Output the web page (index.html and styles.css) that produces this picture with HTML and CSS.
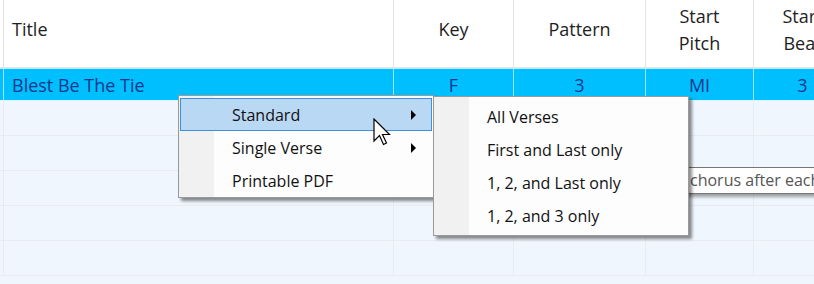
FILE: index.html
```html
<!DOCTYPE html>
<html lang="en">
  <head>
    <meta charset="UTF-8" />
    <meta name="viewport" content="width=device-width, initial-scale=1.0" />
    <link rel="stylesheet" href="styles.css">
    <title>Hymn List</title>
  </head>
  <body>
    <div class="grid">
      <div class="row head">
        <div class="cell gut"></div>
        <div class="cell left">Title</div>
        <div class="cell">Key</div>
        <div class="cell">Pattern</div>
        <div class="cell">Start<br>Pitch</div>
        <div class="cell">Start<br>Beat</div>
      </div>
      <div class="row selected">
        <div class="cell gut"></div>
        <div class="cell left">Blest Be The Tie</div>
        <div class="cell">F</div>
        <div class="cell">3</div>
        <div class="cell">MI</div>
        <div class="cell">3</div>
      </div>
      <div class="row"><div class="cell gut"></div><div class="cell"></div><div class="cell"></div><div class="cell"></div><div class="cell"></div><div class="cell"></div></div>
      <div class="row"><div class="cell gut"></div><div class="cell"></div><div class="cell"></div><div class="cell"></div><div class="cell"></div><div class="cell"></div></div>
      <div class="row"><div class="cell gut"></div><div class="cell"></div><div class="cell"></div><div class="cell"></div><div class="cell"></div><div class="cell"></div></div>
      <div class="row"><div class="cell gut"></div><div class="cell"></div><div class="cell"></div><div class="cell"></div><div class="cell"></div><div class="cell"></div></div>
      <div class="row"><div class="cell gut"></div><div class="cell"></div><div class="cell"></div><div class="cell"></div><div class="cell"></div><div class="cell"></div></div>
    </div>

    <div class="tooltip">chorus after each verse</div>

    <div class="menu menu-main">
      <div class="item active">Standard<span class="arrow"></span></div>
      <div class="item">Single Verse<span class="arrow"></span></div>
      <div class="item">Printable PDF</div>
    </div>

    <div class="menu menu-sub">
      <div class="item">All Verses</div>
      <div class="item">First and Last only</div>
      <div class="item">1, 2, and Last only</div>
      <div class="item">1, 2, and 3 only</div>
    </div>

    <svg class="cursor" width="20" height="30" viewBox="0 0 20 30">
      <path d="M1 1 L1 23 L6.5 17.5 L10.5 26.5 L13.5 25 L9.5 16.5 L16.5 16.5 Z" fill="#fff" stroke="#000" stroke-width="1.2" stroke-linejoin="miter"/>
    </svg>
  </body>
</html>
```

FILE: styles.css
```css
* {
  box-sizing: border-box;
  margin: 0;
  padding: 0;
}

body {
  width: 814px;
  height: 284px;
  overflow: hidden;
  position: relative;
  background-color: #eff6fd;
  font-family: "Open Sans", "Noto Sans", sans-serif;
  color: #1e1e1e;
}

.grid {
  width: 852px;
}

.row {
  display: grid;
  grid-template-columns: 4px 390px 120px 132px 108px 98px;
  height: 35px;
  border-bottom: 1px solid #e6ecf1;
}

.cell {
  display: flex;
  align-items: center;
  justify-content: center;
  text-align: center;
  border-right: 1px solid #e6ecf1;
  font-size: 18px;
}

.cell.left {
  justify-content: flex-start;
  padding-left: 8px;
}

.head {
  height: 68px;
  background-color: #fff;
  border-bottom: 1px solid #e3e3e3;
}

.head .cell {
  border-right-color: #e3e3e3;
  line-height: 27px;
  padding-bottom: 8px;
}

.selected {
  height: 33px;
  background-color: #00bfff;
  border-top: 1px solid #b8ecff;
  border-bottom: 1px solid #dff3ff;
  color: #15378a;
}

.selected .cell {
  border-right-color: #9ee3ff;
}

.menu {
  position: absolute;
  background: linear-gradient(to right, #f1f1f1 0, #f1f1f1 35px, #fdfdfd 35px);
  border: 1px solid #9a9a9a;
  padding: 2px 1px 2px 1px;
  box-shadow: 3px 3px 3px rgba(0, 0, 0, 0.45);
  font-size: 16px;
  color: #111;
}

.menu-main {
  left: 178px;
  top: 95px;
  width: 256px;
  height: 103px;
}

.menu-sub {
  left: 433px;
  top: 96px;
  width: 256px;
  height: 140px;
}

.item {
  position: relative;
  height: 33px;
  display: flex;
  align-items: center;
  padding-left: 51px;
  border: 1px solid transparent;
}

.menu-sub .item {
  padding-top: 2px;
}

.item.active {
  background-color: #b9d8f4;
  border-color: #3d8fe0;
}

.arrow {
  position: absolute;
  right: 15px;
  top: 11px;
  border-left: 5px solid #000;
  border-top: 5px solid transparent;
  border-bottom: 5px solid transparent;
}

.tooltip {
  position: absolute;
  left: 660px;
  top: 167px;
  width: 200px;
  height: 27px;
  padding-left: 29px;
  background-color: #fff;
  border: 1px solid #767676;
  box-shadow: 2px 3px 3px rgba(0, 0, 0, 0.35);
  font-size: 16px;
  line-height: 24px;
  color: #555;
  white-space: nowrap;
}

.cursor {
  position: absolute;
  left: 373px;
  top: 118px;
}
```
